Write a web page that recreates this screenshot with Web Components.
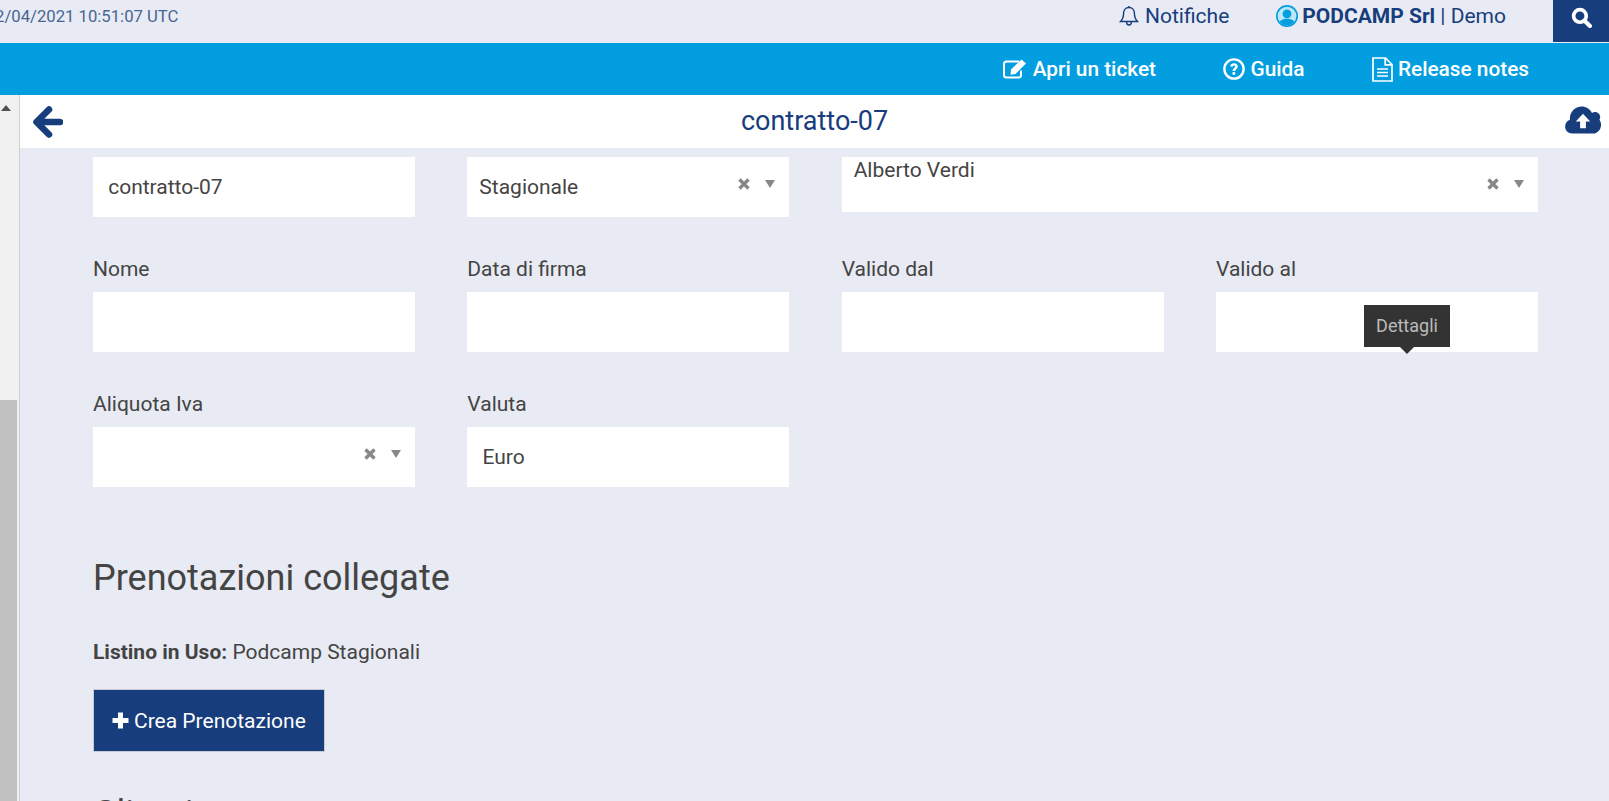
<!DOCTYPE html>
<html>
<head>
<meta charset="utf-8">
<title>contratto-07</title>
<style>
    html, body { margin: 0; height: 100%; overflow: hidden; background: #e8ebf3; }
    body { font-family: Roboto, "Liberation Sans", sans-serif; }
</style>
</head>
<body>
<app-page></app-page>
<script>
const ICONS = {
    bell: '<svg width="20" height="22" viewBox="0 0 20 22" fill="none" stroke="#183d7c" stroke-width="1.4"><path d="M10 2.5c-3.4 0-5.4 2.5-5.4 5.6 0 4.6-1.2 6.6-3 8.4h16.800c-1.800-1.800-3-3.800-3-8.400 0-3.100-2-5.600-5.400-5.600z"/><path d="M10 1v1.500M7.600 16.800c0 1.900 1 3.200 2.400 3.200s2.400-1.300 2.400-3.200"/></svg>',
    user: '<svg width="22" height="22" viewBox="0 0 20 20"><defs><clipPath id="c"><circle cx="10" cy="10" r="8.500"/></clipPath></defs><circle cx="10" cy="10" r="10" fill="#039ee0"/><circle cx="10" cy="10" r="8.500" fill="#bfe6f7"/><g clip-path="url(#c)" fill="#039ee0"><circle cx="10" cy="8" r="4"/><path d="M2 20c0-5.500 3-7.500 8-7.500s8 2 8 7.500z"/></g></svg>',
    search: '<svg width="21" height="21" viewBox="0 0 20 20" fill="none" stroke="#fff"><circle cx="8.500" cy="8.500" r="6" stroke-width="3.500"/><path d="M13 13l5 5" stroke-width="4" stroke-linecap="round"/></svg>',
    edit: '<svg width="25" height="20" viewBox="0 0 25 20"><path d="M18 11.500v4.500c0 1.400-1.100 2.500-2.500 2.500h-12C2.100 18.500 1 17.400 1 16V5c0-1.400 1.100-2.500 2.500-2.500H16" fill="none" stroke="#fff" stroke-width="2"/><path d="M8 10.500L18.500 0.500l4.500 4L12.500 15l-5 .700z" fill="#fff"/></svg>',
    help: '<svg width="22" height="22" viewBox="0 0 21 21"><circle cx="10.500" cy="10.500" r="9.200" fill="none" stroke="#fff" stroke-width="2.300"/><path d="M6.900 8.200c.2-2 1.700-3.100 3.600-3.100 2.100 0 3.600 1.300 3.600 3 0 2.600-2.500 2.400-2.500 4.400H9.200c0-3.100 2.400-2.900 2.400-4.400 0-.6-.5-1-1.100-1-.7 0-1.100.4-1.300 1.200zM9.100 13.400h2.500v2.500H9.100z" fill="#fff"/></svg>',
    file: '<svg width="21" height="25" viewBox="0 0 21 25" fill="none" stroke="#fff" stroke-width="1.700"><path d="M1 1h12.500l6.500 6.500V24H1z"/><path d="M13.200 1v6.800h6.800M5 12h11M5 15.500h11M5 19h11"/></svg>',
    back: '<svg width="31" height="32" viewBox="0 0 31 32" fill="none" stroke="#183d7c" stroke-width="6.600" stroke-linecap="round" stroke-linejoin="round"><path d="M17 3.500L4.500 16 17 28.500M5 16h23"/></svg>',
    upload: '<svg width="38" height="28" viewBox="0 0 38 29"><path d="M8 28.500C3.500 28.500 0.500 25.300 0.500 21.300c0-3.300 2-6 5-7 0-.5-.1-.9-.1-1.400C5.400 5.900 11 .5 17.500.5c4.700 0 8.800 2.700 10.800 6.700 1-.7 2-1 3.200-1 3 0 5.300 2.400 5.300 5.300 0 1-.3 2-.8 2.800 1 1.300 1.700 3.100 1.700 5 0 5-3.800 9.200-8.500 9.200z" fill="#183d7c"/><path d="M19 8l7.500 8H22v7h-6v-7h-4.500z" fill="#fff"/></svg>',
    plus: '<svg width="17" height="17" viewBox="0 0 17 17"><path d="M6 0.500h5V6h5.500v5H11v5.500H6V11H.5V6H6z" fill="#fff"/></svg>'
};

class TopBar extends HTMLElement {
    constructor() {
        super();
        this.attachShadow({ mode: 'open' });
        this.shadowRoot.innerHTML = `
            <style>
                :host { display: flex; align-items: flex-start; height: 43px; color: #183d7c; overflow: hidden; }
                .clock { margin-left: -5px; margin-top: 7px; font-size: 16.700px; line-height: 20px; color: #4a6592; white-space: nowrap; }
                .right { margin-left: auto; display: flex; align-items: center; height: 32px; font-size: 21px; }
                .notif { display: flex; align-items: center; gap: 6px; margin-right: 47px; }
                .user { display: flex; align-items: center; gap: 4px; margin-right: 47px; white-space: nowrap; }
                b { font-weight: 700; }
                svg { display: block; }
                .search { width: 56px; height: 42px; background: #183d7c; display: flex; align-items: center; justify-content: center; margin-bottom: -10px; align-self: flex-start; padding-bottom: 7px; box-sizing: border-box; }
            </style>
            <div class="clock">2/04/2021 10:51:07 UTC</div>
            <div class="right">
                <div class="notif">${ICONS.bell}<span>Notifiche</span></div>
                <div class="user">${ICONS.user}<span><b>PODCAMP Srl</b> | Demo</span></div>
                <div class="search">${ICONS.search}</div>
            </div>
        `;
    }
}

class MenuBar extends HTMLElement {
    constructor() {
        super();
        this.attachShadow({ mode: 'open' });
        this.shadowRoot.innerHTML = `
            <style>
                :host { display: flex; justify-content: flex-end; align-items: center; height: 52px; background: #039ee0; color: #fff; font-size: 20.800px; font-weight: 500; padding-right: 80px; gap: 67.500px; }
                div { display: flex; align-items: center; gap: 5px; white-space: nowrap; }
                svg { display: block; }
            </style>
            <div>${ICONS.edit}<span>Apri un ticket</span></div>
            <div>${ICONS.help}<span>Guida</span></div>
            <div>${ICONS.file}<span>Release notes</span></div>
        `;
    }
}

class TitleBar extends HTMLElement {
    constructor() {
        super();
        this.attachShadow({ mode: 'open' });
        this.shadowRoot.innerHTML = `
            <style>
                :host { display: flex; align-items: center; justify-content: space-between; height: 53px; background: #fff; color: #183d7c; padding: 0 7px 0 12px; }
                h1 { margin: 0 0 2px 2px; font-size: 27px; font-weight: 400; }
                svg { display: block; }
                .cloud { margin-bottom: 4px; }
            </style>
            ${ICONS.back}
            <h1><slot></slot></h1>
            <div class="cloud">${ICONS.upload}</div>
        `;
    }
}

class FormField extends HTMLElement {
    constructor() {
        super();
        this.attachShadow({ mode: 'open' });
        const label = this.getAttribute('label');
        const kind = this.getAttribute('kind') || 'text';
        this.shadowRoot.innerHTML = `
            <style>
                :host { display: block; min-width: 0; color: #444; }
                label { display: block; font-size: 21px; line-height: 25px; margin-bottom: 10px; }
                .box { position: relative; height: 60px; background: #fff; font-size: 21px; line-height: 60px; padding-left: 15.200px; box-sizing: border-box; white-space: nowrap; }
                .box.select { padding-left: 12px; }
                .box.multi { height: 55px; line-height: 26px; padding-left: 12px; }
                .tools { position: absolute; right: 14px; top: 21px; display: flex; align-items: center; gap: 15px; }
                .x { width: 12px; height: 12px; }
                .caret { width: 0; height: 0; border: 5px solid transparent; border-top: 8px solid #888; border-bottom: 0; }
                svg { display: block; }
            </style>
            ${label ? `<label>${label}</label>` : ''}
            <div class="box ${kind}">
                <slot></slot>
                ${kind === 'text' ? '' : `<div class="tools">
                    <svg class="x" viewBox="0 0 12 12" stroke="#888" stroke-width="3.400"><path d="M1.500 1.500l9 9M10.500 1.500l-9 9"/></svg>
                    <div class="caret"></div>
                </div>`}
            </div>
        `;
    }
}

class LinkedBookings extends HTMLElement {
    constructor() {
        super();
        this.attachShadow({ mode: 'open' });
        this.shadowRoot.innerHTML = `
            <style>
                :host { display: block; color: #444; }
                h2 { margin: 0; font-size: 36px; line-height: 42px; font-weight: 400; }
                p { margin: 40px 0 0; font-size: 21px; line-height: 26px; }
                button { display: flex; align-items: center; gap: 5px; margin-top: 24px; height: 63px; width: 232px; padding: 0 0 0 18px; box-sizing: border-box; background: #183d7c; border: 1px solid #c5cad6; color: #fff; font: inherit; font-size: 21px; }
                svg { display: block; }
                h3 { margin: 41px 0 0; font-size: 36px; line-height: 42px; font-weight: 400; }
            </style>
            <h2>Prenotazioni collegate</h2>
            <p><b>Listino in Uso:</b> Podcamp Stagionali</p>
            <button>${ICONS.plus}<span>Crea Prenotazione</span></button>
            <h3>Clienti</h3>
        `;
    }
}

class AppPage extends HTMLElement {
    constructor() {
        super();
        this.attachShadow({ mode: 'open' });
        this.shadowRoot.innerHTML = `
            <style>
                :host { display: block; height: 801px; overflow: hidden; position: relative; }
                .body { display: flex; height: 706px; }
                .scroll { position: relative; flex: none; width: 19px; background: #f1f1f1; border-right: 1px solid #cfcfcf; overflow: hidden; }
                .arrow { position: absolute; left: 1px; top: 10px; width: 0; height: 0; border: 5.500px solid transparent; border-bottom: 6px solid #505050; border-top: 0; }
                .thumb { position: absolute; left: 0; top: 305px; width: 17px; bottom: 0; background: #c1c1c1; }
                .main { flex: 1; min-width: 0; }
                .form { display: grid; grid-template-columns: repeat(4, 322px); column-gap: 52.330px; row-gap: 40px; padding: 9px 0 0 73px; }
                .wide { grid-column: span 2; }
                .tip { position: absolute; left: 1364px; top: 305px; height: 42px; width: 86px; background: #333; color: #bbb; font-size: 18px; line-height: 42px; text-align: center; }
                .tip::after { content: ''; position: absolute; left: 36px; top: 42px; border: 7px solid transparent; border-top: 7px solid #333; border-bottom: 0; }
                linked-bookings { margin: 70px 0 0 73px; }
            </style>
            <top-bar></top-bar>
            <menu-bar></menu-bar>
            <div class="body">
                <div class="scroll"><div class="arrow"></div><div class="thumb"></div></div>
                <div class="main">
                    <title-bar>contratto-07</title-bar>
                    <div class="form">
                        <form-field>contratto-07</form-field>
                        <form-field kind="select">Stagionale</form-field>
                        <form-field kind="multi" class="wide">Alberto Verdi</form-field>
                        <form-field label="Nome"></form-field>
                        <form-field label="Data di firma"></form-field>
                        <form-field label="Valido dal"></form-field>
                        <form-field label="Valido al"></form-field>
                        <form-field label="Aliquota Iva" kind="select"></form-field>
                        <form-field label="Valuta">Euro</form-field>
                    </div>
                    <linked-bookings></linked-bookings>
                </div>
            </div>
            <div class="tip">Dettagli</div>
        `;
    }
}

customElements.define('top-bar', TopBar);
customElements.define('menu-bar', MenuBar);
customElements.define('title-bar', TitleBar);
customElements.define('form-field', FormField);
customElements.define('linked-bookings', LinkedBookings);
customElements.define('app-page', AppPage);
</script>
</body>
</html>
